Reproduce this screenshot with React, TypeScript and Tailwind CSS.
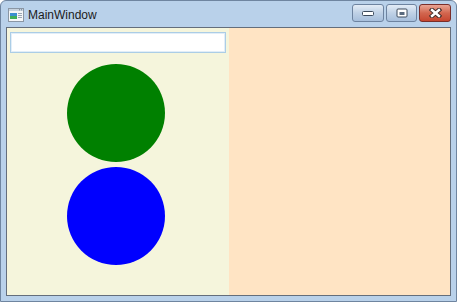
export default function App() {
  return (
    <div className="w-[457px] h-[302px] bg-[#b9d1ea] border border-[#6f85a0] rounded-t-[6px] flex flex-col font-['Noto_Sans',sans-serif] overflow-hidden">
      {/* title bar */}
      <div className="h-[26px] flex items-start shrink-0">
        <div className="flex items-center gap-[4px] pl-[7px] pt-[7px]">
          <svg width="16" height="14" viewBox="0 0 16 14">
            <rect x="0.5" y="0.5" width="15" height="13" fill="#f4f6f8" stroke="#8a96a4" />
            <rect x="1" y="1" width="14" height="2" fill="#c8d3df" />
            <rect x="11" y="1.3" width="1" height="1" fill="#6b7a8c" />
            <rect x="13" y="1.3" width="1" height="1" fill="#6b7a8c" />
            <rect x="2" y="5" width="7" height="6" fill="#3a8fd0" />
            <rect x="2" y="8" width="7" height="3" fill="#3fae5a" />
            <rect x="10" y="5" width="4" height="1" fill="#9aa6b4" />
            <rect x="10" y="7" width="4" height="1" fill="#9aa6b4" />
            <rect x="10" y="9" width="4" height="1" fill="#9aa6b4" />
          </svg>
          <span className="text-[12px] text-[#1b1b1b] leading-none font-['Liberation_Sans',sans-serif]">MainWindow</span>
        </div>
        <div className="ml-auto flex gap-[2px] pt-[3px] pr-[5px]">
          <div className="w-[32px] h-[18px] rounded-[3px] border border-[#6d83a0] bg-linear-to-b from-[#e3ecf6] via-[#bfd1e6] to-[#a7bfdc] flex items-center justify-center">
            <svg width="12" height="6" viewBox="0 0 12 6">
              <rect x="0.5" y="1.5" width="11" height="4" rx="1" fill="#ffffff" stroke="#3c4a5c" />
            </svg>
          </div>
          <div className="w-[31px] h-[18px] rounded-[3px] border border-[#6d83a0] bg-linear-to-b from-[#e3ecf6] via-[#bfd1e6] to-[#a7bfdc] flex items-center justify-center">
            <svg width="12" height="10" viewBox="0 0 12 10">
              <rect x="1" y="1" width="10" height="8" rx="1" fill="#ffffff" stroke="#3c4a5c" />
              <rect x="3.5" y="4" width="5" height="3" fill="#5a6a7e" />
            </svg>
          </div>
          <div className="w-[32px] h-[18px] rounded-[3px] border border-[#7a2e2a] bg-linear-to-b from-[#e8a493] via-[#d2664f] to-[#c6452f] flex items-center justify-center">
            <svg width="13" height="10" viewBox="0 0 13 10">
              <path d="M3 2 L10 8 M10 2 L3 8" stroke="#3d2a28" strokeWidth="4.4" strokeLinecap="square" />
              <path d="M3 2 L10 8 M10 2 L3 8" stroke="#ffffff" strokeWidth="2.4" strokeLinecap="square" />
            </svg>
          </div>
        </div>
      </div>
      {/* client area */}
      <div className="flex-1 mx-[5px] mb-[5px] border border-[#646e7c] flex">
        <div className="w-[222px] bg-[#f5f5dc] flex flex-col items-center pt-[4px]">
          <div className="w-[216px] h-[21px] border border-[#abcde6] bg-white shadow-[inset_0_0_0_1px_#e2eef8]" />
          <div className="mt-[11px] w-[98px] h-[98px] rounded-full bg-[#008000] -translate-x-[2px]" />
          <div className="mt-[5px] w-[98px] h-[98px] rounded-full bg-[#0000ff] -translate-x-[2px]" />
        </div>
        <div className="flex-1 bg-[#ffe4c4]" />
      </div>
    </div>
  );
}
